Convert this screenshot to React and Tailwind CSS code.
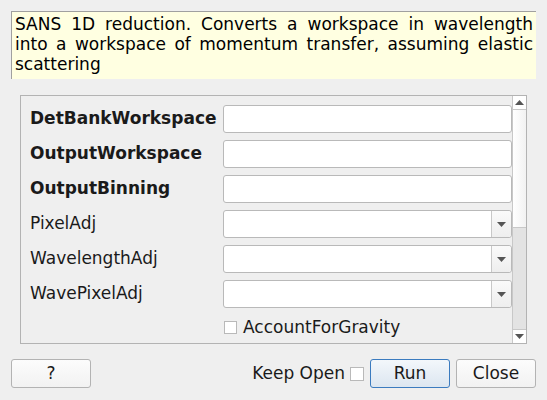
import React from 'react';

const font = { fontFamily: '"DejaVu Sans", sans-serif' };

const Arrow = ({ up }) => (
  <svg width="9" height="5" viewBox="0 0 9 5">
    <path d={up ? 'M0 5 L4.5 0 L9 5 Z' : 'M0 0 L9 0 L4.5 5 Z'} fill="#555" />
  </svg>
);

const TextRow = ({ label, bold }) => (
  <div className="flex items-center h-[28px]">
    <span className={`w-[193px] shrink-0 text-[17px] text-[#1a1a1a] whitespace-nowrap ${bold ? 'font-bold' : ''}`}>{label}</span>
    <div className="w-[289px] h-[28px] bg-white border border-[#b9b9b9] rounded-[3px]" />
  </div>
);

const ComboRow = ({ label }) => (
  <div className="flex items-center h-[28px]">
    <span className="w-[193px] shrink-0 text-[17px] text-[#1a1a1a]">{label}</span>
    <div className="w-[289px] h-[28px] bg-white border border-[#b9b9b9] rounded-[3px] flex">
      <div className="flex-1" />
      <div className="w-[20px] border-l border-[#c8c8c8] bg-gradient-to-b from-[#fafafa] to-[#eeeeee] flex items-center justify-center rounded-r-[3px]">
        <Arrow />
      </div>
    </div>
  </div>
);

export default function App() {
  return (
    <div className="w-[547px] h-[400px] bg-[#efefef] relative overflow-hidden" style={font}>
      <div className="pt-[11px] px-[11px]">
        <div className="w-[525px] h-[68px] bg-[#ffffe1] border-t border-l border-[#a0a0a0] px-[3px] pt-[2px] text-[17px] leading-[20px] text-black text-justify">
          SANS 1D reduction. Converts a workspace in wavelength into a workspace of momentum transfer, assuming elastic scattering
        </div>
      </div>
      <div className="mt-[16px] ml-[20px] w-[507px] h-[249px] border border-[#b3b3b3] flex">
        <div className="flex-1 flex flex-col gap-[7px] pl-[9px] pt-[9px]">
          <TextRow label="DetBankWorkspace" bold />
          <TextRow label="OutputWorkspace" bold />
          <TextRow label="OutputBinning" bold />
          <ComboRow label="PixelAdj" />
          <ComboRow label="WavelengthAdj" />
          <ComboRow label="WavePixelAdj" />
          <div className="flex items-center h-[25px] pl-[194px] gap-[6px]">
            <div className="w-[13px] h-[13px] bg-white border border-[#b9b9b9]" />
            <span className="text-[17px] text-[#1a1a1a]">AccountForGravity</span>
          </div>
        </div>
        <div className="w-[14px] flex flex-col border-l border-[#c8c8c8]">
          <div className="h-[14px] bg-white border-b border-[#c8c8c8] flex items-center justify-center">
            <Arrow up />
          </div>
          <div className="h-[118px] bg-gradient-to-r from-[#ffffff] to-[#f2f2f2] border-b border-[#c8c8c8]" />
          <div className="flex-1 bg-[#e3e3e3]" />
          <div className="h-[14px] bg-white border-t border-[#c8c8c8] flex items-center justify-center">
            <Arrow />
          </div>
        </div>
      </div>
      <div className="flex items-center mt-[15px] px-[11px] h-[29px]">
        <button className="shrink-0 w-[80px] h-[29px] border border-[#b3b3b3] rounded-[3px] bg-gradient-to-b from-[#fcfcfc] to-[#f2f2f2] text-[17px] text-[#1a1a1a]">?</button>
        <div className="flex-1" />
        <span className="shrink-0 text-[17px] text-[#1a1a1a]">Keep Open</span>
        <div className="shrink-0 w-[14px] h-[14px] bg-white border border-[#b9b9b9] ml-[5px]" />
        <button className="shrink-0 ml-[6px] w-[80px] h-[29px] border border-[#3b7bbf] rounded-[3px] bg-gradient-to-b from-[#f3f7fb] to-[#dce6f0] text-[17px] text-[#1a1a1a]">Run</button>
        <button className="shrink-0 ml-[6px] w-[80px] h-[29px] border border-[#b3b3b3] rounded-[3px] bg-gradient-to-b from-[#fcfcfc] to-[#f2f2f2] text-[17px] text-[#1a1a1a]">Close</button>
      </div>
    </div>
  );
}
